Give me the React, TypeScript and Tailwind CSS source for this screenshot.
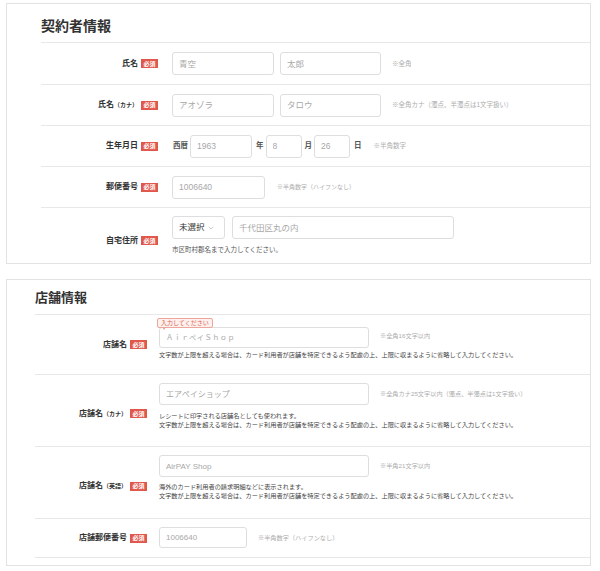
import { ChevronDown } from "lucide-react"
import clsx from "clsx"
import type { ReactNode } from "react"

// 必須 badge shown next to each required label
function Required() {
  return (
    <span className="ml-[3px] inline-flex h-[9px] w-[17px] shrink-0 items-center justify-center bg-[#e0574b] text-[6px] leading-none font-bold text-white">
      必須
    </span>
  )
}

function Field({ placeholder, className }: { placeholder: string; className?: string }) {
  return (
    <input
      readOnly
      placeholder={placeholder}
      className={clsx(
        "min-w-0 rounded-[3px] border border-[#dedede] bg-white px-[6px] text-[#333] outline-none placeholder:text-[#a8a8a8]",
        className
      )}
    />
  )
}

function Note({ children, className }: { children: ReactNode; className?: string }) {
  return <span className={clsx("whitespace-nowrap text-[#adadad]", className)}>{children}</span>
}

function Label({ text, sub, className }: { text: string; sub?: string; className?: string }) {
  return (
    <div className={clsx("flex shrink-0 items-center justify-end", className)}>
      <span className="font-bold whitespace-nowrap text-[#333]">
        {text}
        {sub && <span className="text-[6px]">（{sub}）</span>}
      </span>
      <Required />
    </div>
  )
}

/* ---------- 契約者情報 ---------- */

function ContractRow({
  label,
  sub,
  rowClass,
  labelClass,
  children,
}: {
  label: string
  sub?: string
  rowClass: string
  labelClass?: string
  children: ReactNode
}) {
  return (
    <div className={clsx("flex border-t border-[#e8e8e8]", rowClass)}>
      <Label text={label} sub={sub} className={clsx("w-[117px] text-[8px]", labelClass)} />
      <div className="ml-[14px] flex flex-col justify-center">{children}</div>
    </div>
  )
}

function ContractSection() {
  return (
    <section className="ml-[6px] mt-[3px] w-[585px] border border-[#e2e2e2] bg-white pl-[34px]">
      <h2 className="h-[38px] pt-[10px] text-[14px] leading-[24px] font-bold text-[#333]">契約者情報</h2>

      <ContractRow label="氏名" rowClass="h-[42px]">
        <div className="flex items-center">
          <Field placeholder="青空" className="h-[23px] w-[102px] text-[8.5px]" />
          <Field placeholder="太郎" className="ml-[6px] h-[23px] w-[101px] text-[8.5px]" />
          <Note className="ml-[11px] text-[6.5px]">※全角</Note>
        </div>
      </ContractRow>

      <ContractRow label="氏名" sub="カナ" rowClass="h-[41px]">
        <div className="flex items-center">
          <Field placeholder="アオゾラ" className="h-[23px] w-[102px] text-[8.5px]" />
          <Field placeholder="タロウ" className="ml-[6px] h-[23px] w-[101px] text-[8.5px]" />
          <Note className="ml-[11px] text-[6.5px]">※全角カナ（濁点、半濁点は1文字扱い）</Note>
        </div>
      </ContractRow>

      <ContractRow label="生年月日" rowClass="h-[41px]">
        <div className="flex items-center text-[7.5px] font-bold text-[#555]">
          <span className="ml-[1px]">西暦</span>
          <Field placeholder="1963" className="ml-[2px] h-[23px] w-[62px] text-[8.5px] font-normal" />
          <span className="ml-[4px]">年</span>
          <Field placeholder="8" className="ml-[2px] h-[23px] w-[36px] text-[8.5px] font-normal" />
          <span className="ml-[3px]">月</span>
          <Field placeholder="26" className="ml-[2px] h-[23px] w-[36px] text-[8.5px] font-normal" />
          <span className="ml-[4px]">日</span>
          <Note className="ml-[12px] text-[6.5px] font-normal">※半角数字</Note>
        </div>
      </ContractRow>

      <ContractRow label="郵便番号" rowClass="h-[41px]">
        <div className="flex items-center">
          <Field placeholder="1006640" className="h-[23px] w-[93px] text-[8.5px]" />
          <Note className="ml-[12px] text-[6px]">※半角数字（ハイフンなし）</Note>
        </div>
      </ContractRow>

      <ContractRow label="自宅住所" rowClass="h-[56px]" labelClass="pt-[10px]">
        <div className="flex items-center">
          <div className="flex h-[23px] w-[53px] items-center justify-between rounded-[3px] border border-[#dedede] bg-white pr-[9px] pl-[6px]">
            <span className="text-[8.5px] text-[#333]">未選択</span>
            <ChevronDown className="h-[8px] w-[8px] text-[#999]" strokeWidth={1.5} />
          </div>
          <Field placeholder="千代田区丸の内" className="ml-[7px] h-[23px] w-[222px] text-[8.5px]" />
        </div>
        <p className="mt-[6px] text-[6.5px] leading-[10px] text-[#555]">市区町村郡名まで入力してください。</p>
      </ContractRow>
    </section>
  )
}

/* ---------- 店舗情報 ---------- */

const LIMIT_NOTE =
  "文字数が上限を超える場合は、カード利用者が店舗を特定できるよう配慮の上、上限に収まるように省略して入力してください。"

function ShopRow({
  label,
  sub,
  rowClass,
  labelClass,
  children,
}: {
  label: string
  sub?: string
  rowClass: string
  labelClass?: string
  children: ReactNode
}) {
  return (
    <div className={clsx("flex border-t border-[#e8e8e8]", rowClass)}>
      <Label text={label} sub={sub} className={clsx("w-[112px] text-[8px]", labelClass)} />
      <div className="ml-[12px] flex flex-col">{children}</div>
    </div>
  )
}

function Helper({ children }: { children: ReactNode }) {
  return <p className="text-[6.2px] leading-[9px] whitespace-nowrap text-[#444]">{children}</p>
}

function ShopSection() {
  return (
    <section className="mt-[15px] ml-[6px] w-[585px] border border-[#e2e2e2] bg-white pb-[7px] pl-[28px]">
      <h2 className="h-[34px] pt-[6px] text-[13px] leading-[24px] font-bold text-[#333]">店舗情報</h2>

      <ShopRow label="店舗名" rowClass="h-[60px]">
        <div className="mt-[8px] flex items-center">
          <div className="relative">
            <Field
              placeholder="ＡｉｒペイＳｈｏｐ"
              className="h-[21px] w-[210px] text-[7.2px] tracking-[0.5px]"
            />
            <span className="absolute -top-[5px] -left-[2px] rounded-[2px] border border-[#eba79d] bg-[#fdf0ed] px-[3px] text-[6px] leading-[8px] whitespace-nowrap text-[#e0604f]">
              入力してください
              <span className="absolute top-full left-[4px] h-0 w-0 border-x-[2px] border-t-[3px] border-x-transparent border-t-[#eba79d]" />
            </span>
          </div>
          <Note className="ml-[11px] text-[6.2px]">※全角16文字以内</Note>
        </div>
        <div className="mt-[2px]">
          <Helper>{LIMIT_NOTE}</Helper>
        </div>
      </ShopRow>

      <ShopRow label="店舗名" sub="カナ" rowClass="h-[72px]" labelClass="pt-[6px]">
        <div className="mt-[8px] flex items-center">
          <Field placeholder="エアペイショップ" className="h-[22px] w-[210px] text-[8px]" />
          <Note className="ml-[11px] text-[6.2px]">※全角カナ25文字以内（濁点、半濁点は1文字扱い）</Note>
        </div>
        <div className="mt-[6px]">
          <Helper>レシートに印字される店舗名としても使われます。</Helper>
          <Helper>{LIMIT_NOTE}</Helper>
        </div>
      </ShopRow>

      <ShopRow label="店舗名" sub="英語" rowClass="h-[72px]" labelClass="pt-[7px]">
        <div className="mt-[8px] flex items-center">
          <Field placeholder="AirPAY Shop" className="h-[22px] w-[210px] text-[8px]" />
          <Note className="ml-[11px] text-[6.2px]">※半角21文字以内</Note>
        </div>
        <div className="mt-[5px]">
          <Helper>海外のカード利用者の請求明細などに表示されます。</Helper>
          <Helper>{LIMIT_NOTE}</Helper>
        </div>
      </ShopRow>

      <ShopRow label="店舗郵便番号" rowClass="h-[40px] border-b">
        <div className="mt-[8px] flex items-center">
          <Field placeholder="1006640" className="h-[21px] w-[88px] text-[8px]" />
          <Note className="ml-[11px] text-[6.2px]">※半角数字（ハイフンなし）</Note>
        </div>
      </ShopRow>
    </section>
  )
}

export default function App() {
  return (
    <div className="h-[571px] w-[600px] overflow-hidden bg-white font-['Liberation_Sans','Noto_Sans_CJK_JP',sans-serif]">
      <ContractSection />
      <ShopSection />
    </div>
  )
}
